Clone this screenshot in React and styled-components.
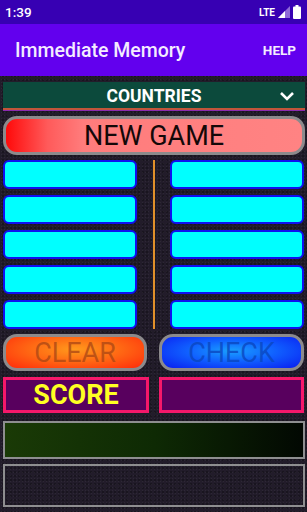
import React from 'react';
import styled, { createGlobalStyle } from 'styled-components';

const GlobalStyle = createGlobalStyle`
  html, body {
    margin: 0;
    padding: 0;
    background: #221c2a;
  }
  body {
    font-family: Roboto, "Noto Sans", sans-serif;
  }
`;

const Screen = styled.div`
  width: 307px;
  height: 512px;
  overflow: hidden;
  display: flex;
  flex-direction: column;
  background-color: #221c2a;
  background-image: radial-gradient(rgba(255, 255, 255, 0.05) 1px, transparent 1px),
    radial-gradient(rgba(0, 0, 0, 0.25) 1px, transparent 1px);
  background-size: 3px 3px, 4px 4px;
  background-position: 0 0, 1px 2px;
`;

const StatusBar = styled.div`
  height: 24px;
  background: #3700b3;
  display: flex;
  align-items: center;
  justify-content: space-between;
  padding: 0 6px 0 5px;
  color: #fff;
  font-size: 13.5px;
  font-weight: 500;
`;

const StatusIcons = styled.div`
  display: flex;
  align-items: center;
  gap: 3px;
  font-size: 10px;
  font-weight: 700;
`;

const AppBar = styled.div`
  height: 52px;
  background: #6200ee;
  display: flex;
  align-items: center;
  justify-content: space-between;
  padding: 0 11px 0 15px;
  color: #fff;
`;

const Title = styled.div`
  font-size: 19.5px;
  font-weight: 500;
  color: #f4ecff;
`;

const Help = styled.div`
  font-size: 13.5px;
  font-weight: 700;
  color: #f4ecff;
`;

const Content = styled.div`
  display: flex;
  flex-direction: column;
  padding: 6px 3px 0 3px;
`;

const Spinner = styled.div`
  height: 25px;
  padding-top: 1px;
  background: #0c4a3c;
  border-bottom: 2px solid #c2553a;
  box-shadow: 0 1px 0 #8a2ab0;
  display: flex;
  align-items: center;
  justify-content: center;
  position: relative;
  color: #fff;
  font-weight: 700;
  font-size: 17.5px;
  margin-right: -1px;
`;

const Chevron = styled.svg`
  position: absolute;
  right: 10px;
  top: 9px;
`;

const NewGame = styled.div`
  margin-top: 6px;
  height: 33px;
  border: 3px solid #8c8a8c;
  border-radius: 14px;
  background: linear-gradient(90deg, #ff0a0a 0%, #ff5a5a 14%, #ff7c7c 26%, #ff8383 100%);
  display: flex;
  align-items: center;
  justify-content: center;
  font-size: 27px;
  color: #140808;
  margin-right: -1px;
`;

const Board = styled.div`
  margin-top: 5px;
  display: grid;
  grid-template-columns: 134px 1fr 134px;
  grid-template-rows: repeat(5, 29px);
  row-gap: 6px;
`;

const Cell = styled.div`
  grid-column: ${(p) => (p.right ? 3 : 1)};
  background: #00ffff;
  border: 2px solid #1010f0;
  border-radius: 6px;
`;

const Divider = styled.div`
  grid-column: 2;
  grid-row: 1 / 6;
  justify-self: center;
  width: 2px;
  background: #e0902a;
`;

const ActionRow = styled.div`
  margin-top: 5px;
  display: grid;
  grid-template-columns: 144px 145px;
  justify-content: space-between;
`;

const Action = styled.div`
  height: 31px;
  border: 3px solid #8c8a8c;
  border-radius: 14px;
  background: ${(p) => p.bg};
  display: flex;
  align-items: center;
  justify-content: center;
  font-size: 27px;
  color: ${(p) => p.fg};
`;

const ScoreRow = styled.div`
  margin-top: 6px;
  display: grid;
  grid-template-columns: 146px 145px;
  justify-content: space-between;
`;

const ScoreBox = styled.div`
  height: 30px;
  border: 3px solid #f5186a;
  background: #58005e;
  display: flex;
  align-items: center;
  justify-content: center;
  color: #ffff22;
  font-weight: 700;
  font-size: 27px;
`;

const Panel = styled.div`
  margin-top: ${(p) => p.mt}px;
  height: ${(p) => p.h}px;
  border: 2px solid #8e8e90;
  background: ${(p) => p.bg || 'transparent'};
  margin-right: -1px;
`;

export default function App() {
  const rows = [0, 1, 2, 3, 4];
  return (
    <Screen>
      <GlobalStyle />
      <StatusBar>
        <span>1:39</span>
        <StatusIcons>
          <span>LTE</span>
          <svg width="12" height="12" viewBox="0 0 12 12">
            <polygon points="0,12 12,0 12,12" fill="#8f6ad8" />
            <polygon points="0,12 7,5 7,12" fill="#ffffff" />
          </svg>
          <svg width="8" height="14" viewBox="0 0 8 14">
            <rect x="2.5" y="0" width="3" height="2" fill="#fff" />
            <rect x="0" y="1.5" width="8" height="12.5" rx="1" fill="#fff" />
          </svg>
        </StatusIcons>
      </StatusBar>
      <AppBar>
        <Title>Immediate Memory</Title>
        <Help>HELP</Help>
      </AppBar>
      <Content>
        <Spinner>
          COUNTRIES
          <Chevron width="16" height="10" viewBox="0 0 16 10">
            <path d="M2 2 L8 8 L14 2" stroke="#fff" strokeWidth="2.6" fill="none" />
          </Chevron>
        </Spinner>
        <NewGame>NEW GAME</NewGame>
        <Board>
          {rows.map((r) => (
            <React.Fragment key={r}>
              <Cell style={{ gridRow: r + 1 }} />
              <Cell right style={{ gridRow: r + 1 }} />
            </React.Fragment>
          ))}
          <Divider />
        </Board>
        <ActionRow>
          <Action
            bg="radial-gradient(ellipse at 50% 40%, #ff9a1c 0%, #ff6a14 45%, #ff2a0a 100%)"
            fg="rgba(170, 70, 20, 0.75)"
          >
            CLEAR
          </Action>
          <Action
            bg="radial-gradient(ellipse at 50% 45%, #1aa0ff 0%, #1060ff 45%, #0a1cf0 100%)"
            fg="rgba(10, 70, 190, 0.8)"
          >
            CHECK
          </Action>
        </ActionRow>
        <ScoreRow>
          <ScoreBox>SCORE</ScoreBox>
          <ScoreBox />
        </ScoreRow>
        <Panel mt={8} h={34} bg="linear-gradient(90deg, #1a3a06 0%, #0e2a04 50%, #020802 100%)" />
        <Panel mt={5} h={39} />
      </Content>
    </Screen>
  );
}
